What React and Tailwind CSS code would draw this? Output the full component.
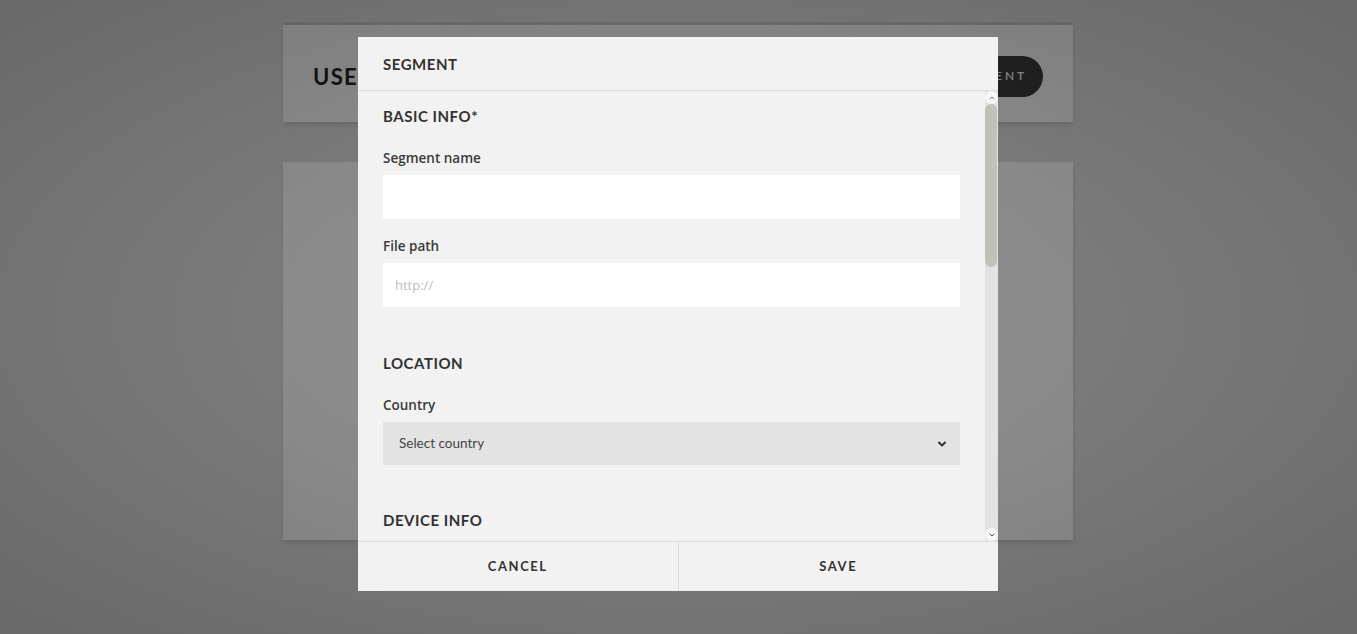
import { ChevronDown, ChevronUp } from 'lucide-react'

function SectionTitle({ children, className = '' }) {
  return (
    <h3 className={`font-['Lato',sans-serif] text-[15px] font-bold leading-5 tracking-[0.035em] text-[#333] ${className}`}>
      {children}
    </h3>
  )
}

function FieldLabel({ children, className = '' }) {
  return (
    <label className={`block font-['Open_Sans',sans-serif] text-[13.5px] font-semibold leading-5 text-[#3a3a3a] ${className}`}>
      {children}
    </label>
  )
}

function FakeScrollbar() {
  return (
    <div className="flex w-[13px] flex-col bg-[#e2e2e2]">
      <div className="flex h-[13px] items-center justify-center rounded-full bg-[#f7f7f7]">
        <ChevronUp className="h-2 w-2 text-[#777]" strokeWidth={3} />
      </div>
      <div className="h-[163px] w-[12px] rounded-full bg-[#c3c0bb]" />
      <div className="flex-1" />
      <div className="flex h-[13px] items-center justify-center rounded-full bg-[#f7f7f7]">
        <ChevronDown className="h-2 w-2 text-[#555]" strokeWidth={3} />
      </div>
    </div>
  )
}

export default function App() {
  return (
    <div className="relative h-[634px] w-full overflow-hidden bg-[#dedede] pr-px font-['Lato',sans-serif]">
      {/* page behind the dialog */}
      <div className="mx-auto w-[790px] pt-[22px]">
        <div className="flex h-[100px] items-center justify-between border-t-[3px] border-[#c9c9c9] bg-[#fbfbfb] pl-[30px] pr-[30px] pt-[5px] shadow-md">
          <h1 className="text-[22px] font-bold tracking-[0.06em] text-[#222]">USER SEGMENTS</h1>
          <button className="h-[41px] rounded-full bg-[#3c3c3c] pl-[24px] pr-[16px] text-[12px] font-semibold tracking-[0.24em] text-[#f4f4f4]">
            NEW SEGMENT
          </button>
        </div>
        <div className="mt-[40px] h-[378px] bg-[#fbfbfb] shadow-md" />
      </div>

      {/* overlay */}
      <div className="absolute inset-0 bg-[radial-gradient(ellipse_at_center,rgba(0,0,0,0.42)_0%,rgba(0,0,0,0.45)_45%,rgba(0,0,0,0.53)_100%)]" />

      {/* dialog */}
      <div className="absolute inset-0 flex justify-center pr-px pt-[37px]">
        <div className="flex h-[554px] w-[640px] flex-col bg-[#f2f2f2]">
          <div className="flex h-[54px] shrink-0 items-center border-b border-[#dcdcdc] px-[25px]">
            <SectionTitle>SEGMENT</SectionTitle>
          </div>

          <div className="flex min-h-0 flex-1">
            <div className="flex-1 overflow-hidden pl-[25px] pr-[25px] pt-[15px]">
              <SectionTitle>BASIC INFO*</SectionTitle>

              <FieldLabel className="mt-[22px]">Segment name</FieldLabel>
              <input className="mt-[7px] block h-[44px] w-full bg-white px-3 text-[13px] outline-none" />

              <FieldLabel className="mt-[17px]">File path</FieldLabel>
              <input
                placeholder="http://"
                className="mt-[7px] block h-[44px] w-full bg-white px-3 font-['Open_Sans',sans-serif] text-[13px] text-[#333] outline-none placeholder:text-[#bdbdbd]"
              />

              <SectionTitle className="mt-[46px]">LOCATION</SectionTitle>

              <FieldLabel className="mt-[22px]">Country</FieldLabel>
              <div className="mt-[7px] flex h-[43px] w-full items-center justify-between bg-[#e3e3e3] pl-4 pr-3">
                <span className="text-[13.5px] text-[#444]">Select country</span>
                <ChevronDown className="h-3 w-3 text-[#333]" strokeWidth={4} />
              </div>

              <SectionTitle className="mt-[45px]">DEVICE INFO</SectionTitle>
            </div>
            <FakeScrollbar />
          </div>

          <div className="flex h-[50px] shrink-0 border-t border-[#dcdcdc]">
            <button className="flex-1 border-r border-[#dcdcdc] text-[13px] font-bold tracking-[0.12em] text-[#333]">
              CANCEL
            </button>
            <button className="flex-1 text-[13px] font-bold tracking-[0.12em] text-[#333]">SAVE</button>
          </div>
        </div>
      </div>
    </div>
  )
}
